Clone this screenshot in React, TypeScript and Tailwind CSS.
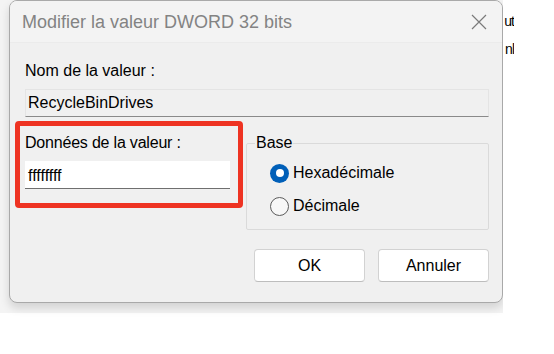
import React from "react";

function CloseIcon() {
  return (
    <svg width="16" height="16" viewBox="0 0 16 16" fill="none">
      <path d="M1 1 L15 15 M15 1 L1 15" stroke="#7a7a7a" strokeWidth="1.2" />
    </svg>
  );
}

function Radio({ checked, label }: { checked: boolean; label: string }) {
  return (
    <div className="flex items-center h-[20px]">
      {checked ? (
        <div className="w-[19px] h-[19px] rounded-full bg-[#005fb8] flex items-center justify-center">
          <div className="w-[8px] h-[8px] rounded-full bg-white" />
        </div>
      ) : (
        <div className="w-[19px] h-[19px] rounded-full border border-[#5c5c5c] bg-[#f7f7f7]" />
      )}
      <span className="ml-[4px] text-[16px] leading-[18px] text-black">{label}</span>
    </div>
  );
}

export default function App() {
  return (
    <div
      className="w-[554px] h-[354px] bg-white overflow-hidden"
      style={{ fontFamily: '"Liberation Sans", Arial, sans-serif' }}
    >
      <div className="flex w-[514px] h-[313px] bg-[#f4f4f4]">
        <div className="w-[9px] shrink-0" />
        <div className="w-[494px] h-[303px] shrink-0 flex flex-col rounded-[8px] border border-[#a9a9a9] bg-[#f0f0f0] shadow-[0_5px_10px_rgba(0,0,0,0.14)] overflow-hidden">
          {/* title bar */}
          <div className="h-[42px] shrink-0 flex items-center justify-between pl-[12px] pr-[15px] bg-[#f3f3f3] border-b border-[#ebebeb]">
            <span className="text-[18px] leading-[20px] text-[#838383] mt-[1px]">
              Modifier la valeur DWORD 32 bits
            </span>
            <CloseIcon />
          </div>
          {/* body */}
          <div className="flex flex-col pl-[15px] pr-[13px]">
            <div className="mt-[19px] h-[18px] text-[16px] leading-[18px] text-black">
              Nom de la valeur :
            </div>
            <div className="mt-[9px] h-[28px] flex items-center px-[2px] border border-[#e4e4e4] border-b-[#8a8a8a] bg-[#f0f0f0] text-[16px] leading-[18px] text-black">
              RecycleBinDrives
            </div>
            <div className="mt-[4px] flex">
              <div className="ml-[-10px] w-[228px] h-[87px] shrink-0 rounded-[4px] border-[5px] border-[#ee3322] pl-[5px] pr-[8px] pt-[8px]">
                <div className="h-[18px] text-[16px] leading-[18px] tracking-[-0.2px] text-black">
                  Données de la valeur :
                </div>
                <div className="mt-[9px] h-[28px] flex items-center pl-[3px] pt-[2px] bg-white border-b border-[#6f6f6f] text-[16px] leading-[18px] text-black">
                  ffffffff
                </div>
              </div>
              <fieldset className="ml-[3px] mt-[13px] w-[243px] h-[96px] border border-[#dadada] rounded-[2px] pl-[23px]">
                <legend className="ml-[-15px] px-[1px] text-[16px] leading-[18px] text-black">
                  Base
                </legend>
                <div className="mt-[11px]">
                  <Radio checked label="Hexadécimale" />
                </div>
                <div className="mt-[13px]">
                  <Radio checked={false} label="Décimale" />
                </div>
              </fieldset>
            </div>
            <div className="mt-[19px] flex justify-end gap-[13px]">
              <button className="w-[111px] h-[33px] rounded-[4px] bg-white border border-[#d2d2d2] border-b-[#bdbdbd] text-[16px] text-black">
                OK
              </button>
              <button className="w-[111px] h-[33px] rounded-[4px] bg-white border border-[#d2d2d2] border-b-[#bdbdbd] text-[16px] text-black">
                Annuler
              </button>
            </div>
          </div>
        </div>
        <div className="w-[11px] shrink-0 bg-white overflow-hidden flex flex-col items-end">
          <div className="mt-[12px] text-[14px] leading-[18px] tracking-[-1px] text-black whitespace-nowrap">ut</div>
          <div className="mt-[10px] text-[14px] leading-[18px] tracking-[-1px] text-black whitespace-nowrap">nl</div>
        </div>
      </div>
    </div>
  );
}
